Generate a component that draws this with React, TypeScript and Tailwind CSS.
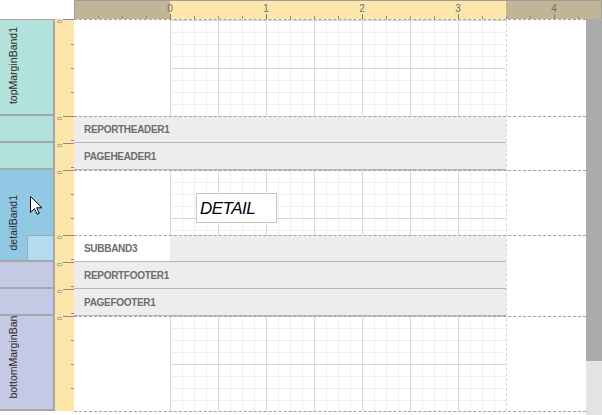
import React from 'react'

// Report designer surface: rulers, band captions, bands and a scrollbar.

type BandKind = 'grid' | 'bar' | 'sub'

interface Band {
  id: string
  h: number
  hClass: string
  kind: BandKind
  label?: string
  dashed: boolean
  origin: number
}

const BANDS: Band[] = [
  { id: 'top', h: 97, hClass: 'h-[97px]', kind: 'grid', dashed: true, origin: 1 },
  { id: 'rh', h: 27, hClass: 'h-[27px]', kind: 'bar', label: 'REPORTHEADER1', dashed: true, origin: 0 },
  { id: 'ph', h: 27, hClass: 'h-[27px]', kind: 'bar', label: 'PAGEHEADER1', dashed: false, origin: 0 },
  { id: 'detail', h: 65, hClass: 'h-[65px]', kind: 'grid', dashed: true, origin: 0 },
  { id: 'sub', h: 27, hClass: 'h-[27px]', kind: 'sub', label: 'SUBBAND3', dashed: true, origin: 0 },
  { id: 'rf', h: 27, hClass: 'h-[27px]', kind: 'bar', label: 'REPORTFOOTER1', dashed: false, origin: 0 },
  { id: 'pf', h: 27, hClass: 'h-[27px]', kind: 'bar', label: 'PAGEFOOTER1', dashed: false, origin: 0 },
  { id: 'bottom', h: 95, hClass: 'h-[95px]', kind: 'grid', dashed: true, origin: 0 },
]

function TopRuler() {
  const ticks: number[] = []
  for (let x = 24; x < 528; x += 24) ticks.push(x)
  return (
    <div className="relative h-[19px] w-[528px]">
      <div className="flex h-full">
        <div className="w-[96px] bg-[#c1b595]" />
        <div className="w-[336px] bg-[#fde6a9]" />
        <div className="w-[96px] bg-[#c1b595]" />
      </div>
      <svg width={528} height={19} className="absolute left-0 top-0">
        <path d="M0.5 19V0.5H527.5V19" stroke="#9d9d9d" fill="none" />
        {ticks.map((x) => {
          const major = (x - 96) % 96 === 0
          return (
            <line
              key={x}
              x1={x + 0.5}
              x2={x + 0.5}
              y1={major ? 14 : 16}
              y2={19}
              stroke={major ? '#7a7a7a' : '#8f8f8f'}
            />
          )
        })}
        {[0, 1, 2, 3, 4].map((n) => (
          <text
            key={n}
            x={96 + n * 96}
            y={11.5}
            textAnchor="middle"
            fontSize={10}
            fill="#6f6f6f"
            fontFamily="Liberation Sans, Arial, sans-serif"
          >
            {n}
          </text>
        ))}
      </svg>
    </div>
  )
}

function Caption({ text }: { text: string }) {
  return (
    <span className="whitespace-nowrap text-[10.5px] leading-[13px] text-[#2b2b2b] [writing-mode:vertical-rl] rotate-180">
      {text}
    </span>
  )
}

function BandHeaders() {
  const cell = 'relative flex flex-col items-start justify-end overflow-hidden border-b-2 border-r-2 border-[#a7a7a7] pb-[10px] pl-[7px]'
  return (
    <div className="flex w-[55px] flex-col">
      <div className="h-px bg-[#a7a7a7]" />
      <div className={`${cell} h-[96px] bg-[#b3e1dc]`}>
        <Caption text="topMarginBand1" />
      </div>
      <div className={`${cell} h-[27px] bg-[#b3e1dc]`} />
      <div className={`${cell} h-[27px] bg-[#b3e1dc]`} />
      <div className={`${cell} h-[92px] bg-[#91c9e5]`}>
        <Caption text="detailBand1" />
        <div className="absolute bottom-0 right-0 h-[25px] w-[26px] border-l border-t border-[#a7a7a7] bg-[#b4dcef]" />
      </div>
      <div className={`${cell} h-[27px] bg-[#c4cae6]`} />
      <div className={`${cell} h-[27px] bg-[#c4cae6]`} />
      <div className={`${cell} h-[95px] bg-[#c4cae6]`}>
        <Caption text="bottomMarginBand1" />
      </div>
    </div>
  )
}

function SideRuler() {
  return (
    <div className="flex w-[19px] flex-col">
      {BANDS.map((band) => {
        const ticks: number[] = []
        for (let y = band.origin + 24; y < band.h; y += 24) ticks.push(y)
        return (
          <div key={band.id} className={`relative bg-[#fde6a9] ${band.hClass}`}>
            <div className="absolute left-[8px] right-0 top-0 h-px bg-[#8c8c8c]" />
            <span className="absolute left-[3px] top-[-1px] rotate-90 text-[7px] leading-none text-[#8c8c8c]">0</span>
            {ticks.map((y) => (
              <div key={y} className="absolute right-0 h-px w-[3px] bg-[#8c8c8c]" style={{ top: y }} />
            ))}
          </div>
        )
      })}
    </div>
  )
}

function Grid({ id, h, oy }: { id: string; h: number; oy: number }) {
  return (
    <svg width={336} height={h} className="block shrink-0">
      <defs>
        <pattern id={`mn-${id}`} width="12" height="12" y={oy} patternUnits="userSpaceOnUse">
          <path d="M0.5 0V12M0 0.5H12" stroke="#efefef" fill="none" />
        </pattern>
        <pattern id={`mj-${id}`} width="48" height="48" y={oy} patternUnits="userSpaceOnUse">
          <path d="M0.5 0V48M0 0.5H48" stroke="#d8d8d8" fill="none" />
        </pattern>
      </defs>
      <rect width="100%" height="100%" fill={`url(#mn-${id})`} />
      <rect width="100%" height="100%" fill={`url(#mj-${id})`} />
    </svg>
  )
}

function BarLabel({ text }: { text: string }) {
  return <span className="text-[10px] font-bold tracking-[-0.3px] text-[#6d6d6d]">{text}</span>
}

function SurfaceBand({ band }: { band: Band }) {
  return (
    <div className={`relative flex ${band.hClass}`}>
      {band.kind === 'grid' && (
        <>
          <div className="w-[96px] shrink-0" />
          <Grid id={band.id} h={band.h} oy={band.origin} />
          <div className="w-[80px] shrink-0" />
        </>
      )}
      {band.kind === 'bar' && (
        <>
          <div className="flex w-[432px] items-center border-b border-[#b6b6b6] bg-[#ededed] pl-[10px]">
            <BarLabel text={band.label ?? ''} />
          </div>
          <div className="w-[80px]" />
        </>
      )}
      {band.kind === 'sub' && (
        <>
          <div className="flex w-[432px] border-b border-[#b6b6b6]">
            <div className="flex w-[96px] items-center bg-white pl-[10px]">
              <BarLabel text={band.label ?? ''} />
            </div>
            <div className="flex-1 bg-[#ededed]" />
          </div>
          <div className="w-[80px]" />
        </>
      )}
      {band.dashed && <div className="absolute inset-x-0 top-0 border-t border-dashed border-[#a2a2a2]" />}
      {band.id === 'detail' && (
        <div className="absolute left-[122px] top-[23px] flex h-[30px] w-[81px] items-center border border-[#c4c4c4] bg-white pl-[3px]">
          <span className="text-[17px] italic leading-none tracking-[-0.5px] text-black">DETAIL</span>
        </div>
      )}
    </div>
  )
}

function Surface() {
  return (
    <div className="relative w-[512px]">
      {BANDS.map((band) => (
        <SurfaceBand key={band.id} band={band} />
      ))}
      <div className="border-t border-dashed border-[#a2a2a2]" />
      <div className="absolute left-[432px] top-0 h-[392px] border-l border-dashed border-[#d6d6d6]" />
    </div>
  )
}

function Scrollbar() {
  return (
    <div className="flex h-[396px] w-[16px] flex-col">
      <div className="h-[342px] bg-[#ababab]" />
      <div className="flex-1 bg-[#e3e3e3]" />
    </div>
  )
}

function Cursor() {
  return (
    <svg width={15} height={21} className="absolute left-[29px] top-[195px]">
      <path d="M1.5 1.5V17.5L5.5 13.6L8.2 19.3L10.3 18.3L7.7 12.8H13Z" fill="#fff" stroke="#000" strokeWidth={1} strokeLinejoin="round" />
    </svg>
  )
}

export default function App() {
  return (
    <div className="relative h-[415px] w-[602px] overflow-hidden bg-white font-['Liberation_Sans',Arial,sans-serif] select-none">
      <div className="flex h-[19px]">
        <div className="w-[74px]" />
        <TopRuler />
      </div>
      <div className="flex">
        <BandHeaders />
        <SideRuler />
        <Surface />
        <Scrollbar />
      </div>
      <Cursor />
    </div>
  )
}
